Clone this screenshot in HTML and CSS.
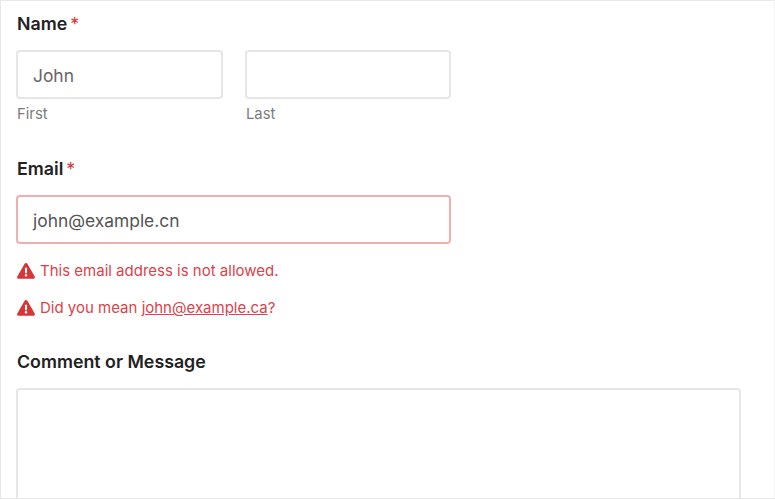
FILE: index.html
```html
<!DOCTYPE html>
<html lang="en">
<head>
<meta charset="utf-8">
<title>Form</title>
<link rel="stylesheet" href="styles.css">
</head>
<body>
<form class="form">
  <div class="field field-name">
    <div class="label">Name<span class="req">*</span></div>
    <div class="name-row">
      <div class="name-col">
        <div class="input">John</div>
        <div class="sub">First</div>
      </div>
      <div class="name-col">
        <div class="input"></div>
        <div class="sub">Last</div>
      </div>
    </div>
  </div>
  <div class="field field-email">
    <div class="label">Email<span class="req">*</span></div>
    <div class="input input-error">john@example.cn</div>
    <div class="error first">
      <svg class="warn" viewBox="0 0 18 16"><path fill-rule="evenodd" d="M9 0c.6 0 1.100.3 1.400.8l7.300 12.700c.6 1-.1 2.300-1.300 2.300H1.600c-1.200 0-1.900-1.300-1.300-2.300L7.600.8C7.900.3 8.400 0 9 0zM7.900 4.800l.2 5.400h1.800l.2-5.400H7.900zM9 11a1.300 1.300 0 1 0 0 2.600A1.300 1.300 0 0 0 9 11z"/></svg>
      <span>This email address is not allowed.</span>
    </div>
    <div class="error second">
      <svg class="warn" viewBox="0 0 18 16"><path fill-rule="evenodd" d="M9 0c.6 0 1.100.3 1.400.8l7.300 12.700c.6 1-.1 2.300-1.300 2.300H1.600c-1.200 0-1.900-1.300-1.300-2.300L7.600.8C7.900.3 8.400 0 9 0zM7.900 4.800l.2 5.400h1.800l.2-5.400H7.900zM9 11a1.300 1.300 0 1 0 0 2.600A1.300 1.300 0 0 0 9 11z"/></svg>
      <span>Did you mean <a href="#">john@example.ca</a>?</span>
    </div>
  </div>
  <div class="field field-message">
    <div class="label">Comment or Message</div>
    <div class="textarea"></div>
  </div>
</form>
</body>
</html>
```

FILE: styles.css
```css
html, body {
  margin: 0;
  padding: 0;
  height: 500px;
  overflow: hidden;
  background: #fff;
}
.form {
  box-sizing: border-box;
  width: 775px;
  height: 499px;
  border: 1px solid #e8e8e8;
  border-right-color: #f4f4f4;
  padding: 11px 33px 0 15px;
  overflow: hidden;
  font-family: Inter, "Noto Sans", sans-serif;
  color: #222;
}
.label {
  padding-left: 1px;
  font-size: 17.8px;
  line-height: 23px;
  font-weight: 600;
  color: #222;
}
.req { margin-left: 3px; color: #d63637; font-weight: 400; }
.name-row {
  display: flex;
  gap: 22px;
  margin-top: 15px;
}
.name-col { width: 207px; }
.name-col + .name-col { width: 206px; }
.input {
  box-sizing: border-box;
  height: 49px;
  border: 2px solid #e6e6e6;
  border-radius: 4px;
  padding: 0 15px;
  font-size: 17.4px;
  line-height: 47px;
  color: #666;
}
.sub {
  margin-top: 6px;
  padding-left: 1px;
  font-size: 14.8px;
  line-height: 18px;
  color: #7b7b7b;
}
.field-email { margin-top: 34px; }
.field-email .input {
  margin-top: 15px;
  width: 435px;
}
.input-error { border-color: #f2aeae; color: #555; }
.error {
  display: flex;
  align-items: center;
  gap: 5px;
  padding-left: 1px;
  font-size: 15px;
  line-height: 18px;
  color: #d9434a;
}
.error.first { margin-top: 18px; }
.error.second { margin-top: 19px; }
.error a { color: #d9434a; text-decoration: underline; }
.warn { width: 18px; height: 16px; fill: #d63637; flex: none; }
.field-message { margin-top: 33px; }
.textarea {
  box-sizing: border-box;
  margin-top: 15px;
  width: 725px;
  height: 200px;
  border: 2px solid #e6e6e6;
  border-radius: 4px;
}
```
